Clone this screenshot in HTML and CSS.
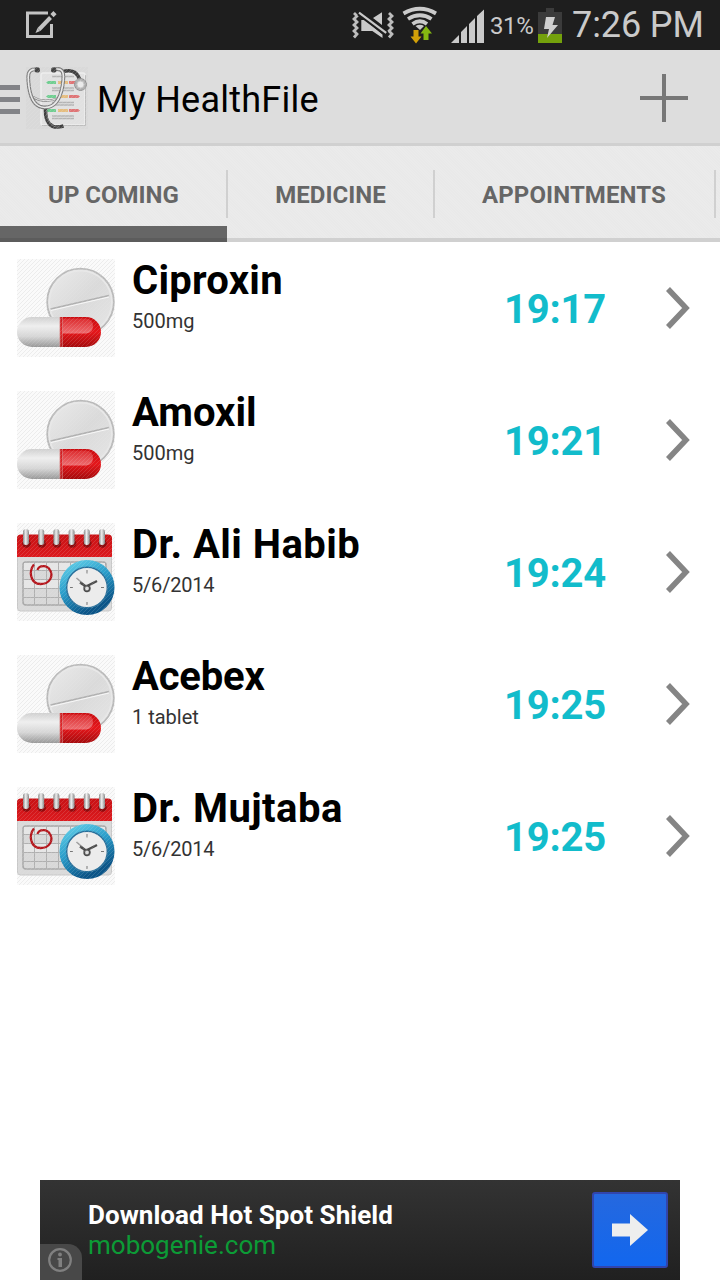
FILE: index.html
```html
<!DOCTYPE html>
<html lang="en">
<head>
<meta charset="utf-8">
<title>My HealthFile</title>
<link rel="stylesheet" href="styles.css">
</head>
<body>
<svg class="defs" width="0" height="0" aria-hidden="true">
  <defs>
    <pattern id="hatch" width="4" height="4" patternUnits="userSpaceOnUse"><path d="M-1 1L1-1M0 4L4 0M3 5L5 3" stroke="#ebebeb" stroke-width=".9"/></pattern>
    <linearGradient id="tablet" x1="0" y1="0" x2="1" y2="1"><stop offset="0" stop-color="#ebebeb"/><stop offset=".5" stop-color="#dadada"/><stop offset="1" stop-color="#e6e6e6"/></linearGradient>
    <linearGradient id="white" x1="0" y1="0" x2="0" y2="1"><stop offset="0" stop-color="#d0d0d0"/><stop offset=".3" stop-color="#efefef"/><stop offset=".65" stop-color="#d6d6d6"/><stop offset="1" stop-color="#999"/></linearGradient>
    <linearGradient id="red" x1="0" y1="0" x2="0" y2="1"><stop offset="0" stop-color="#c90b0f"/><stop offset=".5" stop-color="#e5171b"/><stop offset="1" stop-color="#a50b0d"/></linearGradient>
    <linearGradient id="shine" x1="0" y1="0" x2="0" y2="1"><stop offset="0" stop-color="#dc2c2f"/><stop offset="1" stop-color="#ee6e71"/></linearGradient>
    <linearGradient id="calred" x1="0" y1="0" x2="0" y2="1"><stop offset="0" stop-color="#c81114"/><stop offset="1" stop-color="#dc1a1e"/></linearGradient>
    <linearGradient id="rim" x1="0" y1="0" x2=".5" y2="1"><stop offset="0" stop-color="#62cfe8"/><stop offset=".5" stop-color="#2a9dca"/><stop offset="1" stop-color="#0b5588"/></linearGradient>
    <linearGradient id="ring" x1="0" y1="0" x2="1" y2="0"><stop offset="0" stop-color="#858585"/><stop offset=".45" stop-color="#eee"/><stop offset="1" stop-color="#858585"/></linearGradient>
  </defs>
  <symbol id="pills" viewBox="0 0 98 98">
    <rect width="98" height="98" fill="#fafafa"/>
    <rect width="98" height="98" fill="url(#hatch)"/>
    <circle cx="63.5" cy="43" r="33.3" fill="url(#tablet)" stroke="#bababa" stroke-width="1.8"/>
    <circle cx="63.5" cy="43" r="31.3" fill="none" stroke="#e8e8e8" stroke-width="1.6"/>
    <path d="M33.500 50L92 36.500" stroke="#b0b0b0" stroke-width="1.6"/><path d="M34 51.500L92 38" stroke="#f8f8f8" stroke-width="1"/>
    <path d="M15 58H43V88H15A15 15 0 0 1 15 58Z" fill="url(#white)"/>
    <path d="M43 58H69A15 15 0 0 1 69 88H43Z" fill="url(#red)"/>
    <path d="M45 59.500H69Q76 60 76 67T69 74.500H45Z" fill="url(#shine)"/>
    <path d="M43 58V88M45.300 58V88" stroke="#d77b7b" stroke-width=".8"/>
    <rect width="98" height="98" fill="url(#hatch)" opacity=".16"/>
  </symbol>
  <symbol id="calendar" viewBox="0 0 98 98">
    <rect width="98" height="98" fill="#fafafa"/>
    <rect width="98" height="98" fill="url(#hatch)"/>
    <rect x=".5" y="13" width="94" height="75" rx="3" fill="#dadada" stroke="#c8c8c8"/>
    <path d="M0 34V15Q0 11.500 4 11.500H91Q95 11.500 95 15V34Z" fill="url(#calred)"/>
    <rect x="6" y="39" width="83" height="43" rx="3" fill="#d8d8d8" stroke="#a8a8a8" stroke-width="1.500"/>
    <path d="M7 40H88V47H7ZM7 57H88V65H7Z" fill="#e6e6e6"/>
    <path d="M17.500 39V82M29.500 39V82M41.500 39V82M53.500 39V82M65.500 39V82M77.500 39V82M6 47.500H89M6 56.500H89M6 65.500H89M6 74.500H89" stroke="#b0b0b0" stroke-width="1"/>
    <g fill="#8e0c0e"><circle cx="9.500" cy="20.500" r="4.300"/><circle cx="24.700" cy="20.500" r="4.300"/><circle cx="39.900" cy="20.500" r="4.300"/><circle cx="55.100" cy="20.500" r="4.300"/><circle cx="70.300" cy="20.500" r="4.300"/><circle cx="85.500" cy="20.500" r="4.300"/></g>
    <g fill="url(#ring)"><rect x="6" y="6" width="6" height="16" rx="3"/><rect x="21.200" y="6" width="6" height="16" rx="3"/><rect x="36.400" y="6" width="6" height="16" rx="3"/><rect x="51.600" y="6" width="6" height="16" rx="3"/><rect x="66.800" y="6" width="6" height="16" rx="3"/><rect x="82" y="6" width="6" height="16" rx="3"/></g>
    <path d="M17 41.500C11 49 14 61 23.500 61C33 61 36.500 53 33 47C30 41.500 22 42 20.500 47" fill="none" stroke="#b4161c" stroke-width="2.300"/>
    <circle cx="70" cy="64.500" r="24" fill="#ececec" stroke="url(#rim)" stroke-width="7"/>
    <circle cx="70" cy="64.500" r="20.300" fill="none" stroke="#286f9a" stroke-width="1.400"/>
    <path d="M70 47V50.500M70 79V82M53 64.500H56M84 64.500H87" stroke="#777"/>
    <path d="M59.500 55L67 61.500" stroke="#999" stroke-width="1.500"/><path d="M63 59.500L69 63.500L80 58" fill="none" stroke="#4c4c4c" stroke-width="2.500"/><circle cx="70" cy="65.500" r="2.800" fill="#ddd" stroke="#4c4c4c" stroke-width="1.800"/>
    <rect width="98" height="98" fill="url(#hatch)" opacity=".16"/>
  </symbol>
  <symbol id="chevron" viewBox="0 0 24 42"><path d="M2 2L20 21L2 40" fill="none" stroke="#858585" stroke-width="5.500"/></symbol>
</svg>

<header class="status">
  <svg class="note" width="34" height="32" viewBox="0 0 34 32" fill="none" stroke="#c4c4c4"><path d="M24 4H3.500V27.500H27.500V15" stroke-width="3"/><path d="M15 20.500L26.500 8.500" stroke-width="4"/><path d="M28 6.700L31 3.700" stroke-width="4.500"/><path d="M11.500 24L16.200 22L13.500 19Z" fill="#c4c4c4" stroke="none"/></svg>
  <svg class="signals" width="136" height="50" viewBox="0 0 136 50">
    <g fill="none" stroke="#bdbdbd" stroke-width="2.800"><path d="M2 13L5 16L2 19L5 22L2 25L5 28L2 31L5 34L2 37.500"/><path d="M37 13L40 16L37 19L40 22L37 25L40 28L37 31L40 34L37 37.500"/></g>
    <path d="M21 18L30 12.300V25ZM9.300 20H13L30.500 34.500V38L20.300 31H9.300Z" fill="#cacaca"/>
    <path d="M7 13L34.500 33.500" stroke="#1e1e1e" stroke-width="5.500"/><path d="M7 12.700L34.200 32.800" stroke="#cacaca" stroke-width="2.200"/>
    <g fill="none" stroke="#cacaca" stroke-width="3.800"><path d="M51.500 13.500Q68 4 84 13.500"/><path d="M56 19Q68 11.500 79.500 19"/><path d="M60.500 24Q68 18.500 75 24"/></g><path d="M63.500 26Q68 23.500 72 26L68 30Z" fill="#cacaca"/>
    <path d="M61.500 30H66.500V36.500H69.500L64 43.500L58.500 36.500H61.500Z" fill="#d2a008"/><path d="M71.500 40H76.500V33.500H80L74 26L68.500 33.500H71.500Z" fill="#84b811"/>
    <path d="M99 43L107 35V43ZM109 43V32L115 26V43ZM117 43V24L123 18V43ZM125 43V16L132 9.500V43Z" fill="#cacaca"/>
  </svg>
  <span class="percent">31%</span>
  <svg class="battery" width="24" height="36" viewBox="0 0 24 36"><path d="M0 5H8V1H16V5H24V36H0Z" fill="#3b3b3b"/><path d="M0 27H24V36H0Z" fill="#74a10c"/><path d="M8 10H17L14.500 18H20L9 31L11 22H6Z" fill="#d0d0d0"/></svg>
  <span class="clock">7:26 PM</span>
</header>

<div class="appbar">
  <div class="menu"><i></i><i></i><i></i></div>
  <svg class="logo" width="62" height="62" viewBox="0 0 62 62" fill="none">
    <rect width="62" height="62" fill="#d9d9d9"/>
    <rect x="15" y="6" width="44" height="52" rx="2" fill="#e1e1e1" stroke="#eee" stroke-width="1.500"/><path d="M16 58.500H59.500V8" stroke="#bdbdbd"/>
    <path d="M26 9.500H48M26 21H48M26 23.500H48M26 35.500H48M26 38H48M26 49H48M26 51.500H48" stroke="#b4b4b4" stroke-width="1.500"/>
    <path d="M20 15.500L22 14H30V17H22ZM20 29.500L22 28H30V31H22ZM20 43.500L22 42H30V45H22Z" fill="#70ce91"/>
    <path d="M32 14H42V17H32ZM32 28H42V31H32ZM32 42H42V45H32Z" fill="#e5bd7f"/>
    <path d="M43 14H52L54 15.500L52 17H43ZM43 28H52L54 29.500L52 31H43ZM43 42H52L54 43.500L52 45H43Z" fill="#df7475"/>
    <path d="M19.500 41C19 55 24 63 37.500 59M37 4.500Q51 1 54 14" stroke="#404040" stroke-width="3.600"/><path d="M20.500 43C20.500 54 25 61 34 60" stroke="#898989" stroke-width=".7"/>
    <path d="M7 30Q18 37 33 31" stroke="#888" stroke-width="2.400"/><path d="M7 30Q18 37 33 31" stroke="#e4e4e4" stroke-width="1"/>
    <path d="M11 2.500C0 1 2 11 3 20C5 34 10 40.500 19 40.500S34 33 36.500 19C38.500 7 38 0 28 2.500" stroke="#7c7c7c" stroke-width="3.800"/>
    <path d="M11 2.500C0 1 2 11 3 20C5 34 10 40.500 19 40.500S34 33 36.500 19C38.500 7 38 0 28 2.500" stroke="#e8e8e8" stroke-width="1.600"/>
    <circle cx="11.300" cy="2.900" r="2.700" fill="#444"/><circle cx="27.700" cy="2.900" r="2.700" fill="#444"/>
    <circle cx="54.500" cy="17.500" r="6" fill="#b0b0b0" stroke="#929292"/><circle cx="54.500" cy="17.500" r="3.500" fill="#eaeaea" stroke="#c5c5c5"/>
    <rect width="62" height="62" fill="url(#hatch)" opacity=".2"/>
  </svg>
  <h1 class="title">My HealthFile</h1>
  <svg class="plus" width="48" height="48" viewBox="0 0 48 48"><path d="M24 0V48M0 24H48" stroke="#777" stroke-width="4"/></svg>
</div>

<nav class="tabs">
  <div class="tab tab-active"><span>UP COMING</span></div>
  <div class="tab tab-medicine"><span>MEDICINE</span></div>
  <div class="tab tab-appointments"><span>APPOINTMENTS</span></div>
  <div class="tab tab-next"></div>
</nav>

<main class="list">
  <div class="row"><svg class="thumb"><use href="#pills"/></svg><div class="info"><h2 class="name loose">Ciproxin</h2><p class="detail">500mg</p></div><span class="time">19:17</span><svg class="chevron"><use href="#chevron"/></svg></div>
  <div class="row"><svg class="thumb"><use href="#pills"/></svg><div class="info"><h2 class="name">Amoxil</h2><p class="detail">500mg</p></div><span class="time">19:21</span><svg class="chevron"><use href="#chevron"/></svg></div>
  <div class="row"><svg class="thumb"><use href="#calendar"/></svg><div class="info"><h2 class="name wide">Dr. Ali Habib</h2><p class="detail date">5/6/2014</p></div><span class="time">19:24</span><svg class="chevron"><use href="#chevron"/></svg></div>
  <div class="row"><svg class="thumb"><use href="#pills"/></svg><div class="info"><h2 class="name tight">Acebex</h2><p class="detail">1 tablet</p></div><span class="time">19:25</span><svg class="chevron"><use href="#chevron"/></svg></div>
  <div class="row"><svg class="thumb"><use href="#calendar"/></svg><div class="info"><h2 class="name wide">Dr. Mujtaba</h2><p class="detail date">5/6/2014</p></div><span class="time">19:25</span><svg class="chevron"><use href="#chevron"/></svg></div>
</main>

<aside class="ad">
  <div class="adtext"><p class="headline">Download Hot Spot Shield</p><p class="domain">mobogenie.com</p></div>
  <div class="go"><svg width="36" height="32" viewBox="0 0 36 32"><path d="M0 9.500H18V0L36 16L18 32V22.500H0Z" fill="#eee"/></svg></div>
  <div class="about"><svg width="24" height="24" viewBox="0 0 24 24"><circle cx="12" cy="12" r="10.800" fill="none" stroke="#808080" stroke-width="2.200"/><circle cx="12" cy="6.500" r="1.900" fill="#808080"/><path d="M9.500 10H14V19H10.500V12H9.500Z" fill="#808080"/></svg></div>
</aside>
</body>
</html>
```

FILE: styles.css
```css
* { box-sizing: border-box; }
body {
  margin: 0;
  width: 720px;
  height: 1280px;
  display: flex;
  flex-direction: column;
  background: #fff;
  font-family: Roboto, "Noto Sans", sans-serif;
  overflow: hidden;
}
h1, h2, p { margin: 0; }
svg { display: block; flex: none; }
.defs { position: absolute; }

.status {
  height: 50px;
  flex: none;
  display: flex;
  align-items: flex-start;
  background: #1e1e1e;
  color: #cacaca;
  white-space: nowrap;
}
.note { margin: 9px 0 0 24px; }
.signals { margin-left: 294px; }
.percent { width: 48px; margin-left: 2px; font-size: 24px; letter-spacing: -0.4px; line-height: 52px; }
.battery { margin-top: 7px; }
.clock { margin-left: 10px; font-size: 36px; letter-spacing: -0.1px; line-height: 50px; }

.appbar {
  height: 96px;
  flex: none;
  display: flex;
  align-items: flex-start;
  background: #ddd;
  border-bottom: 3px solid #d0d0d0;
}
.menu { width: 20px; margin-top: 35px; display: flex; flex-direction: column; gap: 7px; }
.menu i { height: 5px; background: #828387; }
.logo { margin: 17px 0 0 6px; }
.title { margin-left: 9px; font-size: 36px; font-weight: 400; letter-spacing: 0.25px; line-height: 101px; height: 93px; white-space: nowrap; }
.plus { margin: 24px 32px 0 auto; }

.tabs {
  height: 96px;
  flex: none;
  display: flex;
  background: repeating-linear-gradient(45deg, #e9e9e9 0 1px, #ebebeb 1px 2px);
  border-bottom: 4px solid #d0d0d0;
}
.tab {
  height: 96px;
  display: flex;
  justify-content: center;
  color: #666;
  font-size: 24px;
  font-weight: 700;
  line-height: 99px;
  white-space: nowrap;
  background: linear-gradient(#d0d0d0, #d0d0d0) right 24px / 2px 48px no-repeat;
}
.tab-active {
  width: 228px;
  padding-right: 1px;
  background: linear-gradient(#d0d0d0, #d0d0d0) right 24px / 2px 48px no-repeat, linear-gradient(#666 12px, #5c5c5c 12px) left bottom / 227px 16px no-repeat;
}
.tab-medicine { width: 207px; padding-right: 2px; }
.tab-appointments { width: 281px; padding-right: 3px; letter-spacing: 0.1px; }

.list { flex: none; }
.row { height: 132px; display: flex; align-items: center; padding: 0 30px 0 17px; }
.thumb { width: 98px; height: 98px; }
.info { flex: 1; align-self: flex-start; padding: 15px 0 0 17px; }
.name { color: #000; font-size: 40px; line-height: 48px; white-space: nowrap; }
.loose { letter-spacing: 0.25px; }
.wide { letter-spacing: 0.45px; }
.tight { letter-spacing: -0.2px; }
.detail { margin-top: 4px; color: #333; font-size: 20px; line-height: 24px; }
.date { letter-spacing: -0.2px; }
.time { width: 162px; color: #12bccb; font-size: 40px; font-weight: 700; letter-spacing: -0.2px; line-height: 48px; padding-top: 3px; }
.chevron { width: 24px; height: 42px; }

.ad {
  position: relative;
  width: 640px;
  height: 100px;
  flex: none;
  margin: auto auto 0;
  display: flex;
  align-items: center;
  padding: 0 12px 0 48px;
  background: linear-gradient(#333, #202020);
}
.adtext { flex: 1; font-size: 26px; line-height: 30px; white-space: nowrap; }
.headline { color: #fff; font-weight: 700; letter-spacing: 0.05px; }
.domain { color: #0c9b36; }
.go {
  width: 76px;
  height: 76px;
  display: flex;
  align-items: center;
  justify-content: center;
  border: 2px solid #3145ad;
  border-radius: 3px;
  background: linear-gradient(#2568df, #1267ee);
}
.about {
  position: absolute;
  left: 0;
  bottom: 0;
  width: 42px;
  height: 36px;
  padding: 4px 0 0 8px;
  background: #484848;
  border-radius: 0 14px 0 0;
}
```
